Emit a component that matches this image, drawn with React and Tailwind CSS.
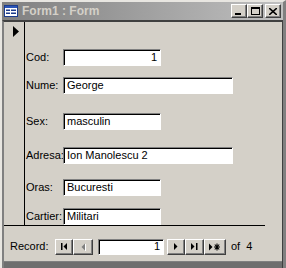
import React from 'react';

const raised =
  'border border-t-white border-l-white border-r-[#404040] border-b-[#404040] shadow-[inset_-1px_-1px_0_#808080] bg-[#d4d0c8]';
const sunken =
  'bg-white border border-t-[#808080] border-l-[#808080] border-r-white border-b-white shadow-[inset_1px_1px_0_#000]';

function Field({ label, value, long, right, top }) {
  return (
    <div className={`flex items-center ${top}`}>
      <div className="w-[38px] pl-[1px] text-black leading-none">{label}</div>
      <div
        className={`${sunken} h-[17px] flex items-center px-[3px] leading-none ${long ? 'w-[170px]' : 'w-[98px]'} ${right ? 'justify-end' : ''}`}
      >
        {value}
      </div>
    </div>
  );
}

function TitleIcon() {
  return (
    <svg width="14" height="12" viewBox="0 0 14 12" className="shrink-0">
      <rect x="0.5" y="0.5" width="13" height="11" fill="#fff" stroke="#1c3c8c" />
      <rect x="1" y="1" width="12" height="2" fill="#2a55b8" />
      <rect x="2" y="4.5" width="4" height="1.5" fill="#1c3c8c" />
      <rect x="7" y="4.5" width="5" height="1.5" fill="#1c3c8c" />
      <rect x="2" y="7.5" width="4" height="1.5" fill="#1c3c8c" />
      <rect x="7" y="7.5" width="5" height="1.5" fill="#1c3c8c" />
    </svg>
  );
}

function CapButton({ children, className = '' }) {
  return (
    <div className={`${raised} w-[16px] h-[14px] flex items-center justify-center ${className}`}>
      {children}
    </div>
  );
}

function NavButton({ w, children }) {
  return (
    <div className={`${raised} ${w} h-[16px] flex items-center justify-center`}>{children}</div>
  );
}

export default function App() {
  return (
    <div className="w-[286px] h-[268px] bg-[#d4d0c8] font-['Liberation_Sans',Arial,sans-serif] text-[11px] text-black overflow-hidden flex flex-col border-l-2 border-t-2 border-r-[3px] border-l-[#e8e6e1] border-t-[#e8e6e1] border-r-[#808080] border-b-0">
      {/* title bar */}
      <div className="h-[18px] shrink-0 flex items-center pl-[2px] pr-[2px] bg-gradient-to-r from-[#808080] to-[#c0c0c0]">
        <TitleIcon />
        <span className="ml-[4px] font-bold text-[12px] text-[#d4d0c8] leading-none">Form1 : Form</span>
        <div className="ml-auto flex items-center">
          <CapButton>
            <div className="w-[6px] h-[2px] bg-black mt-[6px] mr-[2px]" />
          </CapButton>
          <CapButton>
            <div className="w-[9px] h-[8px] border border-black border-t-2" />
          </CapButton>
          <CapButton className="ml-[2px]">
            <svg width="8" height="7" viewBox="0 0 8 7">
              <path d="M0 0 L8 7 M8 0 L0 7" stroke="#000" strokeWidth="1.6" />
            </svg>
          </CapButton>
        </div>
      </div>

      {/* client */}
      <div className="flex-1 flex flex-col border-t-2 border-l-2 border-r border-t-[#404040] border-l-[#808080] border-r-[#404040]">
        {/* detail */}
        <div className="h-[204px] shrink-0 flex border-b border-black w-[261px]">
          <div className="w-[21px] shrink-0 border-r border-black pt-[4px] pl-[9px]">
            <svg width="6" height="11" viewBox="0 0 6 11">
              <path d="M0 0 L6 5.5 L0 11 Z" fill="#000" />
            </svg>
          </div>
          <div className="flex-1 flex flex-col pt-[27px]">
            <Field label="Cod:" value="1" right top="" />
            <Field label="Nume:" value="George" long top="mt-[11px]" />
            <Field label="Sex:" value="masculin" top="mt-[19px]" />
            <Field label="Adresa:" value="Ion Manolescu 2" long top="mt-[17px]" />
            <Field label="Oras:" value="Bucuresti" top="mt-[15px]" />
            <Field label="Cartier:" value="Militari" top="mt-[12px]" />
          </div>
        </div>

        {/* navigation */}
        <div className="h-[35px] shrink-0 flex items-center pl-[6px] pt-[6px]">
          <span className="w-[45px]">Record:</span>
          <NavButton w="w-[18px]">
            <svg width="7" height="7" viewBox="0 0 7 7">
              <rect x="0" y="0" width="1.5" height="7" fill="#000" />
              <path d="M6 0 L2.5 3.5 L6 7 Z" fill="#000" />
            </svg>
          </NavButton>
          <NavButton w="w-[20px]">
            <svg width="5" height="8" viewBox="0 0 5 8">
              <path d="M4 0.5 L0.5 4 L4 7.5 Z" fill="#808080" />
              <path d="M4.5 1 L4.5 8" stroke="#fff" strokeWidth="1" />
            </svg>
          </NavButton>
          <div className={`${sunken} ml-[5px] w-[66px] h-[16px] flex items-center justify-end px-[3px]`}>1</div>
          <div className="ml-[3px] flex">
            <NavButton w="w-[18px]">
              <svg width="4" height="7" viewBox="0 0 4 7">
                <path d="M0 0 L3.5 3.5 L0 7 Z" fill="#000" />
              </svg>
            </NavButton>
            <NavButton w="w-[19px]">
              <svg width="7" height="7" viewBox="0 0 7 7">
                <path d="M0 0 L3.5 3.5 L0 7 Z" fill="#000" />
                <rect x="5" y="0" width="1.5" height="7" fill="#000" />
              </svg>
            </NavButton>
            <NavButton w="w-[22px]">
              <svg width="12" height="8" viewBox="0 0 12 8">
                <path d="M0 0.5 L3.5 4 L0 7.5 Z" fill="#000" />
                <path d="M8 0.5 L8 7.5 M5 4 L11 4 M5.8 1.5 L10.2 6.5 M10.2 1.5 L5.8 6.5" stroke="#000" strokeWidth="1.1" />
              </svg>
            </NavButton>
          </div>
          <span className="ml-[5px]">of&nbsp;&nbsp;4</span>
        </div>
        <div className="flex-1 border-t border-[#808080] bg-[#6e6e6e]" />
      </div>
    </div>
  );
}
